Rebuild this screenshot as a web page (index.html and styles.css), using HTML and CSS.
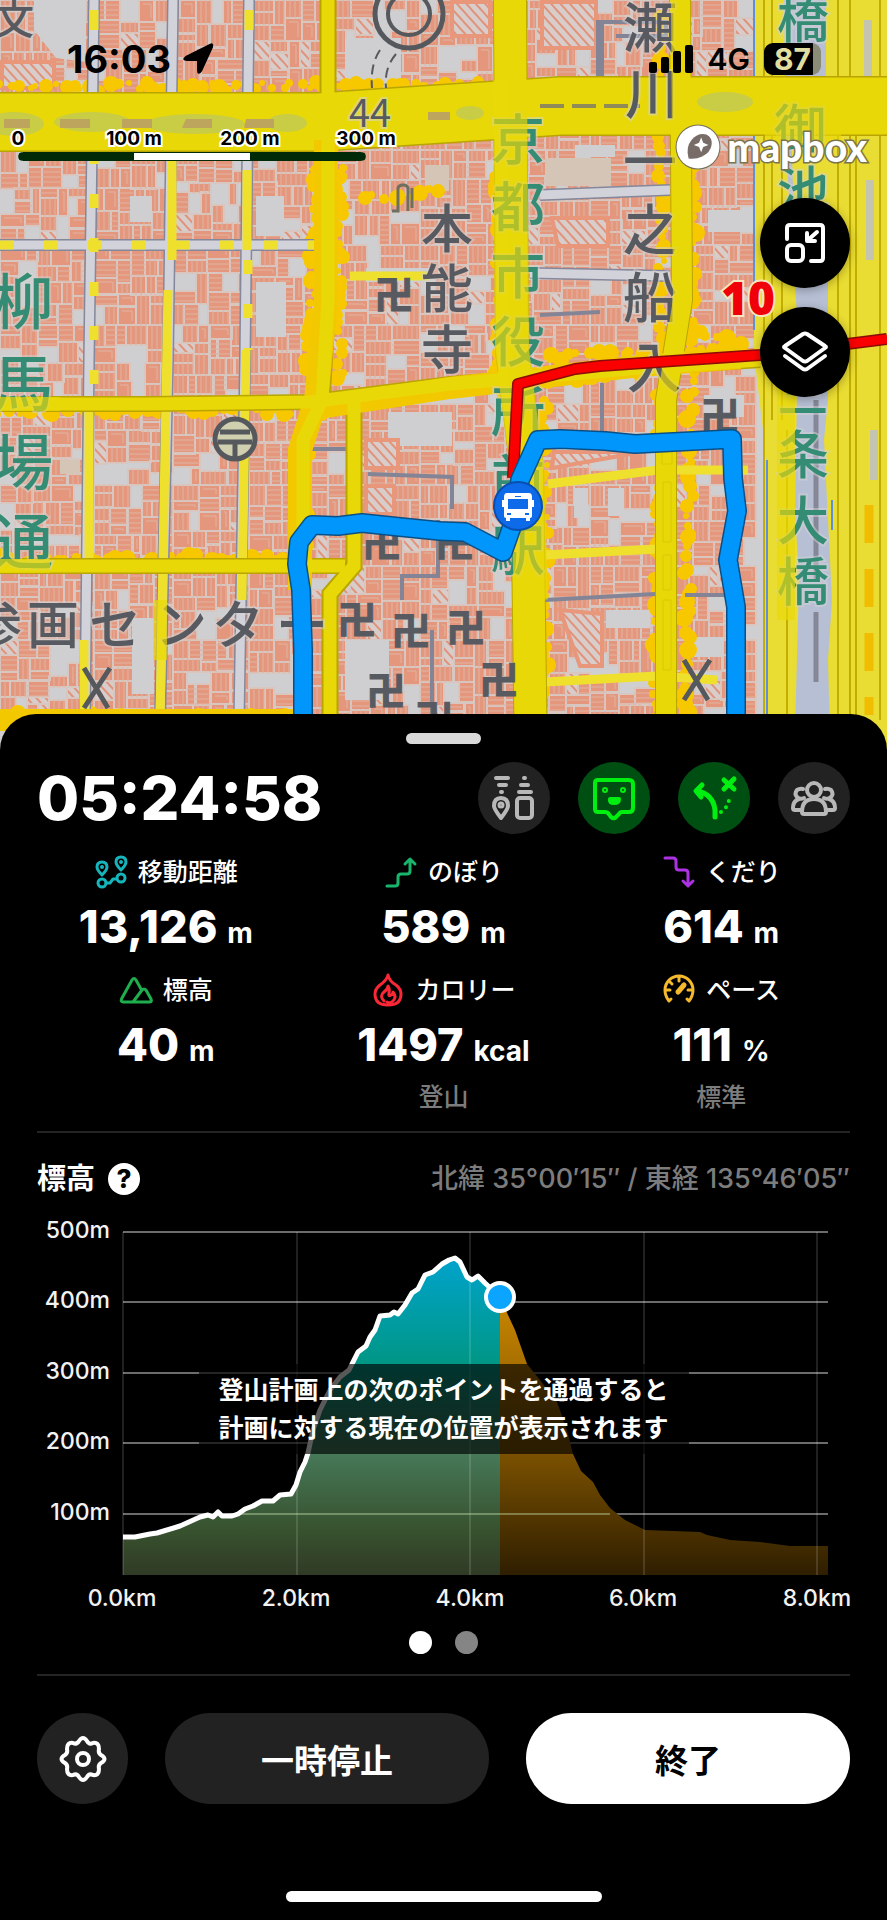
FILE: index.html
```html
<!DOCTYPE html>
<html lang="ja">
<head>
<meta charset="utf-8">
<meta name="viewport" content="width=device-width, initial-scale=1">
<title>活動記録</title>
<link rel="stylesheet" href="styles.css">
</head>
<body>
<main class="screen">
  <section class="map" aria-label="地図">
    <svg class="map-canvas" viewBox="0 0 887 764" preserveAspectRatio="xMidYMin slice" aria-hidden="true">
      <defs>
        <pattern id="hatch" width="7" height="7" patternUnits="userSpaceOnUse" patternTransform="rotate(-42)">
          <rect width="7" height="7" fill="#d8cdca"/><rect width="2" height="7" fill="#e0937a"/>
        </pattern>
      </defs>
      <rect width="887" height="764" fill="#cfcfd1"/>
      <g id="buildings"></g>
      <g fill="#cfcfd1">
        <path d="M34 0h52v62l-30-4-22-28zM256 282h30v55h-30zM132 618h22v76h-22zM366 268h66v14h-66zM388 412h64v34h-64zM345 38h56v50h-56zM256 196h28v40h-28zM130 196h22v26h-22zM345 640h44v60h-44zM574 488h14v30h-14zM608 488h16v28h-16zM708 210h42v22h-42zM575 145h40v12h-40zM704 395h40v22h-40zM606 610h44v18h-44zM690 637h34v20h-34z"/>
      </g>
      <g fill="#d5c5b6"><path d="M545 158h66v28h-66zM425 165h24v26h-24zM60 460h20v14h-20z"/></g>
      <g fill="url(#hatch)" stroke="#e8977a" stroke-width="4">
        <path d="M542 2h54v46h-54zM2 62h52v26H2zM552 218h56v28h-50zM554 452h88l-90 16zM560 610l42 4v52h-22zM366 440h32v28h-32zM366 486h28v28h-28zM452 2h38v34h-38z"/>
      </g>
      <g id="blotches" fill="#f7c800"></g>

      <!-- minor streets -->
      <g fill="none" stroke="#85879a" stroke-width="12">
        <path d="M94 0 89 360 85 720"/><path d="M173 0 168 360 160 720"/><path d="M249 0 245 360 239 720"/>
        <path d="M0 245H320M540 195l130-5M530 273l140 3"/>
      </g>
      <g fill="none" stroke="#d2d2da" stroke-width="9">
        <path d="M94 0 89 360 85 720"/><path d="M173 0 168 360 160 720"/><path d="M249 0 245 360 239 720"/>
        <path d="M0 245H320M540 195l130-5M530 273l140 3"/>
      </g>
      <g fill="none" stroke="#838596" stroke-width="4">
        <path d="M368 474l84 3v32M402 600v-24h36v-56M545 600l110-6M685 595h46M602 383v50M602 22v70M616 36h50v-14h-68v70M310 449h36M540 315l60-3M432 630v100"/>
      </g>
      <g fill="none" stroke="#efe02e" stroke-width="9">
        <path d="M172 150v110M247 170v80M168 290 160 720M246 350 242 600M89 400v170M84 640v90M94 10v20M249 10v20"/>
        <path stroke-dasharray="14 30" d="M94 150v250M248 260v90M0 245H320"/>
        <path d="M350 276h80M548 484l110-14h90M545 555l112-6M545 682l112-6 60 4"/>
      </g>

      <!-- riverside -->
      <path fill="#e9dc32" d="M754 0h133v764H768l-1-300-13-110z"/>
      <path fill="#b7bfd4" d="M784 0h42v90h-36l4 130h34v180l-4 40 8 160-4 60 3 110h-37l5-190-4-70 3-180-12-180z"/>
      <g fill="none" stroke="#c3ae00" stroke-width="2">
        <path d="M764 0v714M772 0v420M782 90v330M838 0v714M850 0v714M856 130v590M880 0v720M787 430v284"/>
      </g>
      <path fill="none" stroke="#5f8fd8" stroke-width="2" d="M754 0v330M767 460v254M832 500v30"/>
      <path fill="none" stroke="#c5c4b0" stroke-width="8" d="M868 20v60M870 180v80M874 430v50"/>
      <path fill="none" stroke="#f0bd00" stroke-width="9" stroke-dasharray="38 26" d="M869 505v210"/>
      <path fill="none" stroke="#858796" stroke-width="5" d="M816 400v180M816 612v70"/>

      <!-- yellow highways -->
      <g fill="none" stroke="#b8a500">
        <path stroke-width="60" d="M0 122H320L560 106H887"/>
        <path stroke-width="16" d="M0 404H150L310 402 450 384 640 368 760 360M0 566H345"/>
        <path stroke-width="17" d="M328 0V300L322 400 303 440V720M354 400V566L330 594V720"/>
        <path stroke-width="34" d="M510 0 512 350 527 470 531 764"/>
        <path stroke-width="22" d="M680 0 682 300 666 400V764"/>
      </g>
      <g fill="none" stroke="#e9d808">
        <path stroke-width="57" d="M0 122H320L560 106H887"/>
        <path stroke-width="24" stroke="#f2c900" d="M326 140V300L316 400 300 450V590"/>
        <path stroke-width="22" stroke="#f2c900" d="M320 408 450 388 640 366 740 358M0 720H300"/>
        <path stroke-width="13" d="M0 404H150L310 402 450 384 640 368 760 360M0 566H345"/>
        <path stroke-width="13" d="M328 0V300L322 400 303 440V720M354 400V566L330 594V720"/>
        <path stroke-width="32" d="M510 0 512 350 527 470 531 764"/>
        <path stroke-width="20" d="M680 0 682 300 666 400V764"/>
      </g>
      <path fill="none" stroke="#c0ab00" stroke-width="1" d="M662 450h10v14h-10zM663 482h8v60h-8zM663 555h8v35h-8zM663 600h8v70h-8z"/>
      <g fill="#c9cc45"><ellipse cx="14" cy="124" rx="30" ry="12"/><ellipse cx="92" cy="122" rx="38" ry="10"/><ellipse cx="195" cy="124" rx="50" ry="10"/><ellipse cx="287" cy="123" rx="20" ry="9"/><ellipse cx="725" cy="102" rx="28" ry="10"/><ellipse cx="470" cy="113" rx="14" ry="7"/></g>
      <g fill="#bda55e"><path d="M4 119h26v9H4zM60 119h30v9H60zM122 119h30v9h-30zM186 119h26v9h-30zM246 119h28v9h-30zM428 112h22v8h-22z"/></g>
      <path stroke="#8f8a58" stroke-width="4" stroke-dasharray="24 8" d="M540 106h100"/>

      <!-- place names -->
      <g class="place green">
        <g font-size="60"><text x="23" y="324">柳</text><text x="23" y="406">馬</text><text x="23" y="485">場</text><text x="23" y="564">通</text></g>
        <g font-size="54"><text x="518" y="160">京</text><text x="518" y="227">都</text><text x="518" y="294">市</text><text x="518" y="362">役</text><text x="518" y="432">所</text><text x="518" y="500">前</text><text x="518" y="571">駅</text></g>
        <g font-size="52"><text x="803" y="38">橋</text><text x="800" y="148">御</text><text x="803" y="210">池</text><text x="803" y="412">三</text><text x="803" y="474">条</text><text x="803" y="540">大</text><text x="803" y="601">橋</text></g>
      </g>
      <g class="place grey">
        <g font-size="54"><text x="650" y="48">瀬</text><text x="652" y="114">川</text><text x="650" y="182">一</text><text x="650" y="250">之</text><text x="650" y="318">船</text><text x="654" y="388">入</text></g>
        <g font-size="52"><text x="447" y="248">本</text><text x="447" y="308">能</text><text x="447" y="369">寺</text></g>
        <g font-size="52"><text x="-4" y="644">参</text><text x="53" y="644">画</text><text x="115" y="644">セ</text><text x="181" y="644">ン</text><text x="238" y="644">タ</text><text x="302" y="644">ー</text></g>
        <text x="14" y="34" font-size="40">文</text>
        <text x="370" y="127" font-size="38" font-weight="400">44</text>
        <g class="temple"><text x="394" y="309">卍</text><text x="382" y="557">卍</text><text x="357" y="634">卍</text><text x="411" y="645">卍</text><text x="386" y="705">卍</text><text x="455" y="557">卍</text><text x="466" y="642">卍</text><text x="499" y="694">卍</text><text x="434" y="733">卍</text><text x="720" y="430">卍</text></g>
      </g>
      <g fill="none" stroke="#55585c" stroke-width="5"><path d="M84 668l24 40M110 668l-26 40M684 660l24 40M710 660l-26 40"/></g>
      <g fill="none" stroke="#55585c"><circle cx="409" cy="14" r="34" stroke-width="5"/><circle cx="409" cy="14" r="21" stroke-width="4"/><path stroke-width="2" stroke-dasharray="10 6" d="M380 50q-10 15-8 38M396 54q-12 14-10 34"/><circle cx="235" cy="439" r="20" fill="#d0d0b0" stroke-width="5"/><path stroke-width="5" d="M220 432h30M218 442h34M235 442v16"/></g>
      <g fill="none" stroke="#6d7060" stroke-width="3"><path d="M392 211h6v-22q0-4 5-4t5 4v22M412 188v20"/></g>
      <g fill="none" stroke="#e9d808" opacity=".68">
        <path stroke-width="34" d="M510 80 512 350 527 470 531 600"/>
        <path stroke-width="18" d="M680 0 682 300 666 400V764M786 380V620"/>
        <path stroke-width="14" d="M0 404H60M0 566H50M160 600v60"/>
        <path stroke-width="46" d="M765 122h76"/>
      </g>

      <!-- routes -->
      <g fill="none" stroke-linejoin="round">
        <path stroke="#8b0d08" stroke-width="12" d="M513 478 518 384 575 369 600 366 760 355 887 339"/>
        <path stroke="#fb0000" stroke-width="9" d="M513 478 518 384 575 369 600 366 760 355 887 339"/>
        <path stroke="#0a4f86" stroke-width="20" d="M303 764V650L301 590 297 564 299 542 312 525 338 526 362 523 400 527 440 531 465 532 503 552 516 515 520 480 538 440 560 439 605 441 635 444 732 439 733 478 737 511 728 560 736 607V764"/>
        <path stroke="#0096fb" stroke-width="17" d="M303 764V650L301 590 297 564 299 542 312 525 338 526 362 523 400 527 440 531 465 532 503 552 516 515 520 480 538 440 560 439 605 441 635 444 732 439 733 478 737 511 728 560 736 607V764"/>
      </g>
      <circle cx="518" cy="506" r="24" fill="#0d6ae9" stroke="#094fae" stroke-width="2"/>
      <path fill="#fff" fill-rule="evenodd" d="M507 493h22q3 0 3 4v3h2v7h-2v9q0 2-2 2v3h-4v-3h-16v3h-4v-3q-2 0-2-2v-9h-2v-7h2v-3q0-4 3-4zm1 6v10h20v-10zm7-3v1h6v-1zm-8 17v2h4v-2zm18 0v2h4v-2z"/>
      <text class="route-no" x="748" y="315">10</text>
    </svg>

    <header class="status">
      <div class="status-time">16:03
        <svg width="34" height="34" viewBox="0 0 34 34" aria-hidden="true"><path stroke="#000" stroke-width="2" stroke-linejoin="round" d="M29 3Q32 1 31 5L20 29Q17 33 17 28V18H6Q1 18 5 15Z"/></svg>
      </div>
      <div class="status-right">
        <svg width="46" height="30" viewBox="0 0 46 30" aria-hidden="true"><rect x="1" y="18" width="8" height="11" rx="2"/><rect x="13" y="13" width="8" height="16" rx="2"/><rect x="25" y="7" width="8" height="22" rx="2"/><rect x="37" y="1" width="8" height="28" rx="2"/></svg>
        <span>4G</span>
        <span class="battery">87</span>
      </div>
    </header>

    <div class="map-info">
      <div class="scale">
        <div class="scale-labels"><span>0</span><span>100 m</span><span>200 m</span><span>300 m</span></div>
        <div class="scale-bar"></div>
      </div>
      <a class="mapbox" href="#mapbox">
        <svg width="46" height="46" viewBox="0 0 44 44" aria-hidden="true"><circle cx="22" cy="22" r="20.5" fill="#fff" stroke="#75705a" stroke-width="2"/><path fill="#776c68" d="M13 33q-3-11 3-18t14-5q6 3 5 10T26 31q-6 3-13 2z"/><path fill="#fff" d="M25 13l2 5 5 2-5 2-2 5-2-5-5-2 5-2z"/></svg>
        mapbox
      </a>
    </div>

    <div class="map-tools">
      <button type="button" aria-label="地図を縮小">
        <svg width="44" height="44" viewBox="0 0 44 44" fill="none" stroke="#fff" stroke-width="4"><path stroke-linecap="round" stroke-linejoin="round" d="M4 18V7q0-3 3-3h30q3 0 3 3v30q0 3-3 3H28"/><rect x="4" y="24" width="16" height="16" rx="4"/><path stroke-linecap="round" stroke-linejoin="round" d="M34 11 25 19M24 12v8h8"/></svg>
      </button>
      <button type="button" aria-label="レイヤー">
        <svg width="48" height="44" viewBox="0 0 48 44" fill="none" stroke="#fff" stroke-width="4" stroke-linecap="round" stroke-linejoin="round"><path d="M22 4q2-1 4 0l18 12q2 1 0 2L26 31q-2 1-4 0L4 18q-2-1 0-2z"/><path d="M4 26l18 13q2 1 4 0l18-13"/></svg>
      </button>
    </div>
  </section>

  <section class="sheet">
    <div class="handle"></div>
    <div class="top">
      <h1 class="timer">05:24:58</h1>
      <div class="modes">
        <button type="button" aria-label="位置の共有">
          <svg width="48" height="48" viewBox="0 0 48 48" fill="none" stroke="#b8b8b8" stroke-width="4" stroke-linecap="round" stroke-linejoin="round"><path d="M6 4h12M9 11h7M11 18h1M34 4h1M31 11h7M29 18h12"/><path d="M11 24q7 0 7 8 0 3-7 12Q4 35 4 32q0-8 7-8z"/><circle cx="11" cy="31" r="2" stroke-width="3"/><rect x="27" y="24" width="15" height="20" rx="3"/></svg>
        </button>
        <button class="on" type="button" aria-label="音声">
          <svg width="48" height="48" viewBox="0 0 48 48" fill="none" stroke="#00ee10" stroke-width="4" stroke-linecap="round" stroke-linejoin="round"><path d="M8 6h31q4 0 4 4v24q0 4-4 4h-7q-2 0-3 2l-4 4q-2 1-4-1l-3-4q-1-1-3-1H8q-3 0-3-3V9q0-3 3-3z"/><circle cx="15" cy="16" r="1"/><circle cx="33" cy="16" r="1"/><path fill="#00ee10" d="M20 25h9q0 4-5 4t-4-4z"/></svg>
        </button>
        <button class="on" type="button" aria-label="ルート">
          <svg width="48" height="48" viewBox="0 0 48 48" fill="none" stroke="#00ee10" stroke-width="4" stroke-linecap="round" stroke-linejoin="round"><path stroke-width="5" d="M25 43V36Q23 20 7 17M12 11 6 17l5 6M34 6l10 9M44 5 34 15"/><path stroke-dasharray="0 7" d="M31 38Q39 33 40 20"/></svg>
        </button>
        <button type="button" aria-label="メンバー">
          <svg width="48" height="48" viewBox="0 0 48 48" fill="none" stroke="#b8b8b8" stroke-width="4" stroke-linecap="round" stroke-linejoin="round"><circle cx="24" cy="16" r="7"/><path d="M12 38q0-13 12-13t12 13q0 2-2 2H14q-2 0-2-2z"/><path d="M14 24q-4 2-7-1t0-7q3-2 6-1M34 24q4 2 7-1t0-7q-3-2-6-1M11 36H5q-2 0-2-2 0-7 6-9M37 36h6q2 0 2-2 0-7-6-9"/></svg>
        </button>
      </div>
    </div>

    <dl class="stats">
      <div class="stat">
        <dt><svg width="34" height="34" viewBox="0 0 34 34" fill="none" stroke="#15b5bb" stroke-width="3" stroke-linecap="round" stroke-linejoin="round"><path d="M8 7q5 0 5 5 0 3-5 8-5-5-5-8 0-5 5-5zM27 2q5 0 5 5 0 3-5 8-5-5-5-8 0-5 5-5z"/><circle cx="8" cy="12" r="1" stroke-width="2"/><circle cx="27" cy="7" r="1" stroke-width="2"/><circle cx="8" cy="28" r="4"/><circle cx="27" cy="23" r="4"/><path d="M12 28h4l3-4h4"/></svg>移動距離</dt>
        <dd>13,126 <small>m</small></dd>
      </div>
      <div class="stat">
        <dt><svg width="34" height="34" viewBox="0 0 34 34" fill="none" stroke="#18b56c" stroke-width="3" stroke-linecap="round" stroke-linejoin="round"><path d="M3 31h8q3 0 3-3v-6q0-3 3-3h6q3 0 3-3V4M21 9l5-5 5 5"/></svg>のぼり</dt>
        <dd>589 <small>m</small></dd>
      </div>
      <div class="stat">
        <dt><svg width="34" height="34" viewBox="0 0 34 34" fill="none" stroke="#ad32e3" stroke-width="3" stroke-linecap="round" stroke-linejoin="round"><path d="M3 3h8q3 0 3 3v6q0 3 3 3h6q3 0 3 3v12M21 26l5 5 5-5"/></svg>くだり</dt>
        <dd>614 <small>m</small></dd>
      </div>
      <div class="stat">
        <dt><svg width="34" height="34" viewBox="0 0 34 34" fill="none" stroke="#1fae4d" stroke-width="3" stroke-linecap="round" stroke-linejoin="round"><path d="M4 29q-3 0-1-4L13 7q2-3 4 0l5 9M14 29l9-12q2-2 4 0l5 9q1 3-1 3zM4 29h12"/></svg>標高</dt>
        <dd>40 <small>m</small></dd>
      </div>
      <div class="stat">
        <dt><svg width="34" height="34" viewBox="0 0 34 34" fill="none" stroke="#fa2737" stroke-width="3" stroke-linecap="round" stroke-linejoin="round"><path d="M17 2q1 6 8 10 5 4 5 9 0 11-13 11T4 21q0-5 5-9 7-5 8-10z"/><path d="M13 28q-5-5 0-9 4-3 4-6 2 3 1 7-1 4 2 2 2-1 2-3 4 5 0 9-3 3-6 1"/></svg>カロリー</dt>
        <dd>1497 <small>kcal</small></dd>
        <dd class="note">登山</dd>
      </div>
      <div class="stat">
        <dt><svg width="34" height="34" viewBox="0 0 34 34" fill="none" stroke="#f5b92d" stroke-width="3" stroke-linecap="round" stroke-linejoin="round"><path d="M7 28Q3 23 3 17A14 14 0 0 1 31 17Q31 23 27 28M7 28l2-2M27 28l-2-2M17 4v4M8 9l2 2M4 17h4M26 17h4"/><path stroke-width="5" d="M16 19l6-7"/></svg>ペース</dt>
        <dd>111 <small class="percent">%</small></dd>
        <dd class="note">標準</dd>
      </div>
    </dl>

    <div class="elevation">
      <div class="elevation-head">
        <h2>標高</h2>
        <button class="help" type="button" aria-label="標高について">?</button>
        <p>北緯 35°00′15″ / 東経 135°46′05″</p>
      </div>
      <div class="chart">
        <svg viewBox="37 1210 813 406" role="img" aria-label="標高グラフ">
          <defs>
            <linearGradient id="done" gradientUnits="userSpaceOnUse" x1="0" y1="1258" x2="0" y2="1575"><stop offset="0" stop-color="#00a3cc"/><stop offset=".33" stop-color="#009786"/><stop offset=".62" stop-color="#467858"/><stop offset=".85" stop-color="#38532f"/><stop offset="1" stop-color="#303a25"/></linearGradient>
            <linearGradient id="todo" gradientUnits="userSpaceOnUse" x1="0" y1="1300" x2="0" y2="1575"><stop offset="0" stop-color="#c98600"/><stop offset=".55" stop-color="#7c5200"/><stop offset="1" stop-color="#2f1e00"/></linearGradient>
          </defs>
          <g stroke="#6c6c6c" stroke-width="2"><path d="M123 1232H828M123 1302H828M123 1373H828M123 1443H828M123 1514H828"/></g>
          <path fill="url(#done)" d="M123 1537 135 1537 150 1534 157 1533 180 1526 200 1517 208 1515 213 1517 218 1512 222 1516 232 1516 238 1514 245 1509 253 1506 262 1501 273 1501 280 1495 291 1494 296 1485 300 1472 305 1462 308 1453 313 1430 320 1410 330 1390 340 1377 349 1370 358 1352 366 1346 370 1337 375 1330 380 1316 390 1315 394 1312 398 1314 405 1305 412 1293 418 1289 425 1275 433 1272 442 1264 449 1260 455 1258 460 1262 467 1277 472 1280 478 1276 485 1283 500 1297V1575H123z"/>
          <path fill="url(#todo)" d="M500 1297 508 1315 515 1330 527 1364 540 1380 557 1402 567 1430 573 1454 581 1471 593 1482 600 1495 610 1508 625 1520 645 1530 700 1532 707 1535 730 1540 760 1542 790 1546 828 1546V1575H500z"/>
          <g stroke="#fff" stroke-opacity=".13" stroke-width="2"><path d="M123 1232V1575M297 1232V1575M470 1232V1575M644 1232V1575M817 1232V1575"/></g>
          <path stroke="#c9e6b0" stroke-opacity=".4" stroke-width="2" d="M230 1514H610"/>
          <path fill="none" stroke="#fff" stroke-width="5" stroke-linejoin="round" d="M123 1537 135 1537 150 1534 157 1533 180 1526 200 1517 208 1515 213 1517 218 1512 222 1516 232 1516 238 1514 245 1509 253 1506 262 1501 273 1501 280 1495 291 1494 296 1485 300 1472 305 1462 308 1453 313 1430 320 1410 330 1390 340 1377 349 1370 358 1352 366 1346 370 1337 375 1330 380 1316 390 1315 394 1312 398 1314 405 1305 412 1293 418 1289 425 1275 433 1272 442 1264 449 1260 455 1258 460 1262 467 1277 472 1280 478 1276 485 1283 500 1297"/>
          <circle cx="500" cy="1297" r="14" fill="#0ba4ff" stroke="#fff" stroke-width="4"/>
          <g class="axis" text-anchor="end"><text x="110" y="1238">500m</text><text x="110" y="1308">400m</text><text x="110" y="1379">300m</text><text x="110" y="1449">200m</text><text x="110" y="1520">100m</text></g>
          <g class="axis" text-anchor="middle"><text x="122" y="1606">0.0km</text><text x="296" y="1606">2.0km</text><text x="470" y="1606">4.0km</text><text x="643" y="1606">6.0km</text><text x="817" y="1606">8.0km</text></g>
        </svg>
        <p class="chart-message">登山計画上の次のポイントを通過すると<br>計画に対する現在の位置が表示されます</p>
      </div>
      <div class="pager"><button class="current" type="button" aria-label="1ページ目"></button><button type="button" aria-label="2ページ目"></button></div>
    </div>

    <footer class="actions">
      <button class="gear" type="button" aria-label="設定">
        <svg width="48" height="48" viewBox="0 0 48 48" fill="none" stroke="#fff" stroke-width="4" stroke-linejoin="round"><circle cx="24" cy="24" r="6"/><path d="M20 6Q24 0 28 6 30 10 34 8 40 7 40 14 39 18 42 20 49 24 42 28 39 30 40 34 40 41 34 40 30 38 28 42 24 48 20 42 18 38 14 40 8 41 8 34 9 30 6 28-1 24 6 20 9 18 8 14 8 7 14 8 18 10 20 6z"/></svg>
      </button>
      <button class="pause" type="button">一時停止</button>
      <button class="finish" type="button">終了</button>
    </footer>
    <div class="home"></div>
  </section>
</main>
<script src="map.js"></script>
</body>
</html>
```

FILE: styles.css
```css
* { box-sizing: border-box; }
body {
  margin: 0;
  background: #000;
  color: #fff;
  font-family: Inter, "Noto Sans CJK JP", sans-serif;
}
h1, h2, p, dl, dd { margin: 0; }
button {
  padding: 0;
  border: 0;
  color: inherit;
  font: inherit;
  cursor: pointer;
}
svg { display: block; flex: none; }

.screen { display: flex; flex-direction: column; min-height: 100vh; }

/* Map */
.map { position: relative; height: 764px; overflow: hidden; color: #000; }
.map-canvas { position: absolute; inset: 0; width: 100%; height: 100%; }
.place {
  font-family: "Noto Sans CJK JP", sans-serif;
  font-weight: 500;
  text-anchor: middle;
  stroke: #d4d4d4;
  stroke-opacity: 0.5;
  stroke-width: 4px;
  paint-order: stroke;
}
.green { fill: #348c74; }
.grey { fill: #575a60; }
.temple { font-size: 39px; font-weight: 700; stroke: #575a60; stroke-opacity: 1; stroke-width: 1px; }
.route-no {
  font: 900 46px "Noto Sans", sans-serif;
  text-anchor: middle;
  fill: #f00008;
  stroke: #f6e6c0;
  stroke-width: 4px;
  paint-order: stroke;
}
.status {
  position: relative;
  display: flex;
  justify-content: space-between;
  align-items: center;
  height: 118px;
  padding: 0 66px 0 67px;
}
.status-time { display: flex; align-items: center; gap: 10px; font-size: 38px; font-weight: 700; }
.status-right { display: flex; align-items: center; gap: 14px; font-size: 30px; font-weight: 600; }
.battery {
  width: 57px;
  height: 32px;
  border-radius: 9px;
  background: linear-gradient(90deg, #000 49px, #8b8c78 49px);
  color: #e0dea0;
  font-size: 30px;
  font-weight: 700;
  line-height: 32px;
  text-align: center;
}
.map-info {
  position: relative;
  display: flex;
  justify-content: space-between;
  align-items: flex-start;
  padding: 0 20px 0 18px;
}
.scale { width: 348px; margin-top: 9px; }
.scale-labels {
  display: flex;
  justify-content: space-between;
  margin-bottom: 1px;
  font-size: 19px;
  font-weight: 700;
  line-height: 24px;
  -webkit-text-stroke: 4px #fff;
  paint-order: stroke;
}
.scale-labels span { display: flex; justify-content: center; width: 0; white-space: nowrap; }
.scale-bar {
  height: 9px;
  border: 1px solid #002a08;
  border-radius: 5px;
  background: linear-gradient(90deg, #002a08 33.3%, #fff 33.3% 66.7%, #002a08 66.7%);
}
.mapbox {
  display: flex;
  align-items: center;
  gap: 6px;
  color: #fff;
  font: 900 39px/58px Lato, sans-serif;
  text-decoration: none;
  -webkit-text-stroke: 3px #7a744c;
  paint-order: stroke;
}
.map-tools {
  position: relative;
  display: flex;
  flex-direction: column;
  align-items: flex-end;
  gap: 19px;
  padding: 22px 37px;
}
.map-tools button {
  display: grid;
  place-items: center;
  width: 90px;
  height: 90px;
  border-radius: 50%;
  background: #000;
  box-shadow: 0 2px 10px rgb(0 0 0 / 30%);
}

/* Sheet */
.sheet {
  position: relative;
  flex: 1;
  display: flex;
  flex-direction: column;
  margin-top: -50px;
  padding: 19px 37px 18px;
  border-radius: 36px 36px 0 0;
  background: #000;
}
.handle { align-self: center; width: 75px; height: 11px; border-radius: 6px; background: #d9d9d9; }
.top { display: flex; justify-content: space-between; align-items: center; margin-top: 18px; }
.timer { font-size: 61px; font-weight: 800; line-height: 72px; }
.modes { display: flex; gap: 28px; }
.modes button {
  display: grid;
  place-items: center;
  width: 72px;
  height: 72px;
  border-radius: 50%;
  background: #222;
}
.modes .on { background: #004f12; }

.stats {
  display: grid;
  grid-template-columns: repeat(3, 1fr);
  margin: 18px -10px 0;
}
.stat { min-height: 118px; text-align: center; }
.stat dt {
  display: flex;
  justify-content: center;
  align-items: center;
  gap: 10px;
  font-size: 25px;
  font-weight: 500;
  line-height: 40px;
}
.stat dd { margin-top: 8px; font-size: 45px; font-weight: 800; line-height: 54px; }
.stat small { font-size: 28px; font-weight: 700; }
.stat .percent { font-weight: 600; }
.stat .note { margin-top: 0; color: #7c7c7c; font-size: 25px; font-weight: 500; line-height: 38px; }

.elevation { margin-top: 15px; border: solid #242424; border-width: 2px 0; }
.elevation-head { display: flex; align-items: center; gap: 13px; margin-top: 26px; line-height: 40px; }
.elevation-head h2 { font-size: 29px; font-weight: 700; }
.elevation-head p { margin-left: auto; color: #7c7c7c; font-size: 27px; font-weight: 500; }
.help {
  width: 32px;
  height: 32px;
  border-radius: 50%;
  background: #fff;
  color: #000;
  font-size: 26px;
  font-weight: 800;
  line-height: 32px;
}
.chart { position: relative; margin-top: 11px; }
.chart svg { width: 100%; height: auto; overflow: visible; }
.axis { fill: #f2f2f2; font-size: 23px; font-weight: 500; }
.chart-message {
  position: absolute;
  top: 38%;
  left: 50%;
  padding: 7px 20px;
  transform: translateX(-50%);
  background: rgb(0 0 0 / 65%);
  font-size: 25px;
  font-weight: 700;
  line-height: 38px;
  white-space: nowrap;
}
.pager { display: flex; justify-content: center; gap: 23px; padding: 15px 0 20px; }
.pager button { width: 23px; height: 23px; border-radius: 50%; background: #858585; }
.pager .current { background: #fff; }

.actions { display: grid; grid-template-columns: 91px 1fr 1fr; gap: 37px; margin-top: 37px; }
.actions button { height: 91px; border-radius: 46px; font-size: 33px; font-weight: 700; }
.actions .gear, .actions .pause { background: #222; }
.actions .gear { display: grid; place-items: center; }
.actions .finish { background: #fff; color: #000; }
.home {
  align-self: center;
  width: 316px;
  height: 11px;
  margin-top: auto;
  border-radius: 6px;
  background: #fff;
}
```

FILE: map.js
```js
// Fills the city blocks with small buildings from a fixed seed.
let seed = 20240;
function random() {
  seed = (seed * 1103515245 + 12345) % 2147483648;
  return seed / 2147483648;
}
const NS = "http://www.w3.org/2000/svg";
const shapes = { plain: "", hatch: "" };
let lines = "";

function split(x, y, w, h) {
  if (w * h > 420 && Math.max(w, h) > 16) {
    const cut = 0.3 + random() * 0.4;
    if (w > h) {
      split(x, y, w * cut, h);
      split(x + w * cut, y, w * (1 - cut), h);
    } else {
      split(x, y, w, h * cut);
      split(x, y + h * cut, w, h * (1 - cut));
    }
    return;
  }
  const kind = random();
  if (kind < 0.1) return;
  const [left, top, wide, tall] = [x, y, w, h].map(Math.round);
  shapes[kind > 0.96 ? "hatch" : "plain"] += `M${left} ${top}h${wide}v${tall}h-${wide}z`;
  if (kind > 0.96) return;
  if (kind > 0.5) {
    for (let i = 5; i < wide; i += 5) lines += `M${left + i} ${top}v${tall}`;
  } else if (kind > 0.25) {
    for (let i = 5; i < tall; i += 5) lines += `M${left} ${top + i}h${wide}`;
  } else {
    lines += `M${left + 4} ${top + 4}h${Math.max(wide - 8, 1)}v${Math.max(tall - 8, 1)}`;
  }
}

const columns = [0, 94, 173, 249, 328, 420, 505, 590, 675, 756];
const rows = [0, 95, 150, 245, 325, 404, 485, 566, 640, 724];
for (let c = 1; c < columns.length; c++) {
  for (let r = 1; r < rows.length; r++) {
    split(columns[c - 1], rows[r - 1], columns[c] - columns[c - 1], rows[r] - rows[r - 1]);
  }
}

const buildings = document.getElementById("buildings");
function addPath(d, fill, stroke, width) {
  const path = document.createElementNS(NS, "path");
  path.setAttribute("d", d);
  path.setAttribute("fill", fill);
  path.setAttribute("stroke", stroke);
  path.setAttribute("stroke-width", width);
  buildings.append(path);
}
addPath(shapes.plain, "#e5977d", "#d8c6c0", 2);
addPath(shapes.hatch, "url(#hatch)", "#d8c6c0", 2);
addPath(lines, "none", "#deb3a4", 1);

// Ragged amber edges that follow the wide roads.
const edges = [
  [0, 88, 480, 84], [0, 411, 320, 412], [320, 402, 640, 374], [0, 560, 300, 558],
  [318, 150, 302, 560], [498, 150, 500, 400], [543, 400, 546, 720], [663, 20, 656, 720],
  [694, 120, 686, 720], [0, 716, 300, 716], [550, 356, 740, 350], [690, 330, 750, 350],
  [365, 200, 440, 190], [340, 170, 340, 380]
];
const blotches = document.getElementById("blotches");
for (const [x1, y1, x2, y2] of edges) {
  const steps = Math.round(Math.hypot(x2 - x1, y2 - y1) / 9);
  for (let i = 0; i <= steps; i++) {
    const dot = document.createElementNS(NS, "circle");
    dot.setAttribute("cx", Math.round(x1 + (x2 - x1) * i / steps + random() * 8 - 4));
    dot.setAttribute("cy", Math.round(y1 + (y2 - y1) * i / steps + random() * 8 - 4));
    dot.setAttribute("r", Math.round(3 + random() * 6));
    blotches.append(dot);
  }
}
```
